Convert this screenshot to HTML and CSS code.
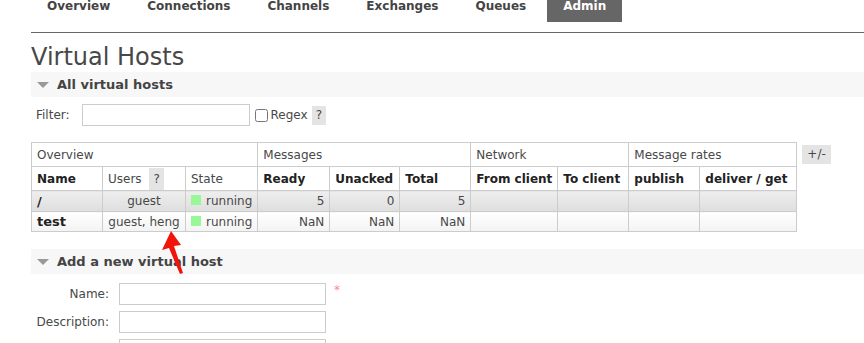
FILE: index.html
```html
<!DOCTYPE html>
<html lang="en">
  <head>
    <meta charset="UTF-8" />
    <title>RabbitMQ Management</title>
    <link rel="stylesheet" href="styles.css">
  </head>
  <body>
    <ul class="tabs">
      <li>Overview</li>
      <li>Connections</li>
      <li>Channels</li>
      <li>Exchanges</li>
      <li>Queues</li>
      <li class="selected">Admin</li>
    </ul>

    <div class="main">
      <h1>Virtual Hosts</h1>

      <div class="section">
        <h2><span class="arrow"></span>All virtual hosts</h2>
        <div class="filter">
          <label>Filter:</label>
          <input type="text" class="filter-text" />
          <input type="checkbox" class="regex-box" />
          <span class="regex">Regex</span>
          <span class="help">?</span>
        </div>

        <div class="table-wrap">
          <table class="list">
            <tr class="group">
              <th colspan="3">Overview</th>
              <th colspan="3">Messages</th>
              <th colspan="2">Network</th>
              <th colspan="2">Message rates</th>
            </tr>
            <tr class="cols">
              <th class="c-name">Name</th>
              <th class="c-users plain">Users <span class="help">?</span></th>
              <th class="c-state plain">State</th>
              <th class="c-ready">Ready</th>
              <th class="c-unacked">Unacked</th>
              <th class="c-total">Total</th>
              <th class="c-from">From client</th>
              <th class="c-to">To client</th>
              <th class="c-pub">publish</th>
              <th class="c-get">deliver / get</th>
            </tr>
            <tr class="alt1">
              <td class="name">/</td>
              <td class="center">guest</td>
              <td><span class="state"></span>running</td>
              <td class="num">5</td>
              <td class="num">0</td>
              <td class="num">5</td>
              <td></td>
              <td></td>
              <td></td>
              <td></td>
            </tr>
            <tr class="alt2">
              <td class="name">test</td>
              <td class="center">guest, heng</td>
              <td><span class="state"></span>running</td>
              <td class="num">NaN</td>
              <td class="num">NaN</td>
              <td class="num">NaN</td>
              <td></td>
              <td></td>
              <td></td>
              <td></td>
            </tr>
          </table>
          <span class="toggle">+/-</span>
        </div>
      </div>

      <div class="section">
        <h2><span class="arrow"></span>Add a new virtual host</h2>
        <form class="add-form">
          <div class="form-row">
            <label>Name:</label>
            <input type="text" />
            <span class="mand">*</span>
          </div>
          <div class="form-row">
            <label>Description:</label>
            <input type="text" />
          </div>
          <div class="form-row last">
            <label></label>
            <input type="text" />
          </div>
        </form>
      </div>
    </div>

    <!-- annotation arrow pointing at the users cell -->
    <svg class="pointer" width="40" height="60" viewBox="0 0 40 60">
      <path d="M11 1 L2 20 L9 18 L20 44 L23 43 L14 16 L21 15 Z" fill="#f0140a" />
    </svg>
  </body>
</html>
```

FILE: styles.css
```css
body {
  margin: 0;
  font-family: "DejaVu Sans", Verdana, sans-serif;
  font-size: 12px;
  color: #484848;
  background: #fff;
  position: relative;
  overflow: hidden;
}
.tabs {
  list-style: none;
  margin: 0 0 0 31px;
  padding: 0 0 0 16px;
  display: flex;
  height: 32px;
  border-bottom: 1px solid #666;
}
.tabs li {
  font-weight: bold;
  font-size: 12px;
  color: #444;
  margin-right: 37px;
  height: 22px;
  line-height: 13px;
}
.tabs li.selected {
  background: #666;
  color: #fff;
  padding: 0 16px;
  margin-left: -16px;
}
.main {
  padding-left: 31px;
}
h1 {
  font-size: 24px;
  font-weight: normal;
  margin: 9px 0 0;
  line-height: 30px;
  color: #484848;
}
.section h2 {
  background: #f7f7f7;
  margin: 0;
  font-size: 13px;
  font-weight: bold;
  height: 25px;
  line-height: 25px;
  padding-left: 6px;
  display: flex;
  align-items: center;
  color: #444;
}
.arrow {
  width: 0;
  height: 0;
  border-left: 6px solid transparent;
  border-right: 6px solid transparent;
  border-top: 6px solid #999;
  margin-right: 8px;
}
.filter {
  display: flex;
  align-items: center;
  margin: 7px 0 0 5px;
  height: 22px;
}
.filter label {
  margin-right: 12px;
}
.filter-text {
  width: 168px;
  height: 22px;
  box-sizing: border-box;
  border: 1px solid #ccc;
  margin: 0;
}
.regex-box {
  margin: 0 3px 0 5px;
  width: 13px;
  height: 13px;
}
.regex {
  margin-right: 4px;
}
.help {
  display: inline-block;
  background: #e4e4e4;
  padding: 0 4px;
  line-height: 19px;
  height: 19px;
}
.table-wrap {
  display: flex;
  align-items: flex-start;
  margin-top: 16px;
}
.list {
  border-collapse: collapse;
  border: 1px solid #ccc;
}
.list th,
.list td {
  border: 1px solid #ccc;
  padding: 0 5px;
  text-align: left;
  white-space: nowrap;
}
.list tr.group th {
  font-weight: normal;
  height: 23px;
}
.list tr.cols th {
  font-weight: bold;
  color: #222;
  height: 23px;
}
.list tr.cols th.plain {
  font-weight: normal;
  color: #484848;
}
.list tr.cols .help {
  margin-left: 4px;
  line-height: 22px;
  height: 22px;
}
.c-name { width: 60px; }
.c-users { width: 72px; }
.c-state { width: 61px; }
.c-ready { width: 61px; }
.c-unacked { width: 59px; }
.c-total { width: 60px; }
.c-from { width: 76px; }
.c-to { width: 60px; }
.c-pub { width: 60px; }
.c-get { width: 86px; }
.list td {
  height: 19px;
}
.alt1 td {
  height: 20px;
  background: linear-gradient(#eee, #dedede);
}
.alt2 td {
  background: linear-gradient(#fff, #f3f3f3);
}
.list td.name {
  font-weight: bold;
  color: #222;
  font-size: 13px;
}
.list td.center {
  text-align: center;
}
.list td.num {
  text-align: right;
}
.state {
  display: inline-block;
  width: 10px;
  height: 10px;
  background: #98f898;
  margin-right: 5px;
}
.toggle {
  background: #e4e4e4;
  padding: 0 5px;
  margin: 3px 0 0 5px;
  line-height: 19px;
}
.section + .section {
  margin-top: 17px;
}
.add-form {
  padding-top: 9px;
}
.form-row {
  display: flex;
  align-items: center;
  margin-bottom: 6px;
}
.form-row label {
  width: 78px;
  text-align: right;
  margin-right: 10px;
}
.form-row input {
  width: 207px;
  height: 22px;
  box-sizing: border-box;
  border: 1px solid #ccc;
  margin: 0;
}
.mand {
  color: #f88;
  margin-left: 8px;
  align-self: flex-start;
}
.pointer {
  position: absolute;
  left: 160px;
  top: 230px;
}
```
